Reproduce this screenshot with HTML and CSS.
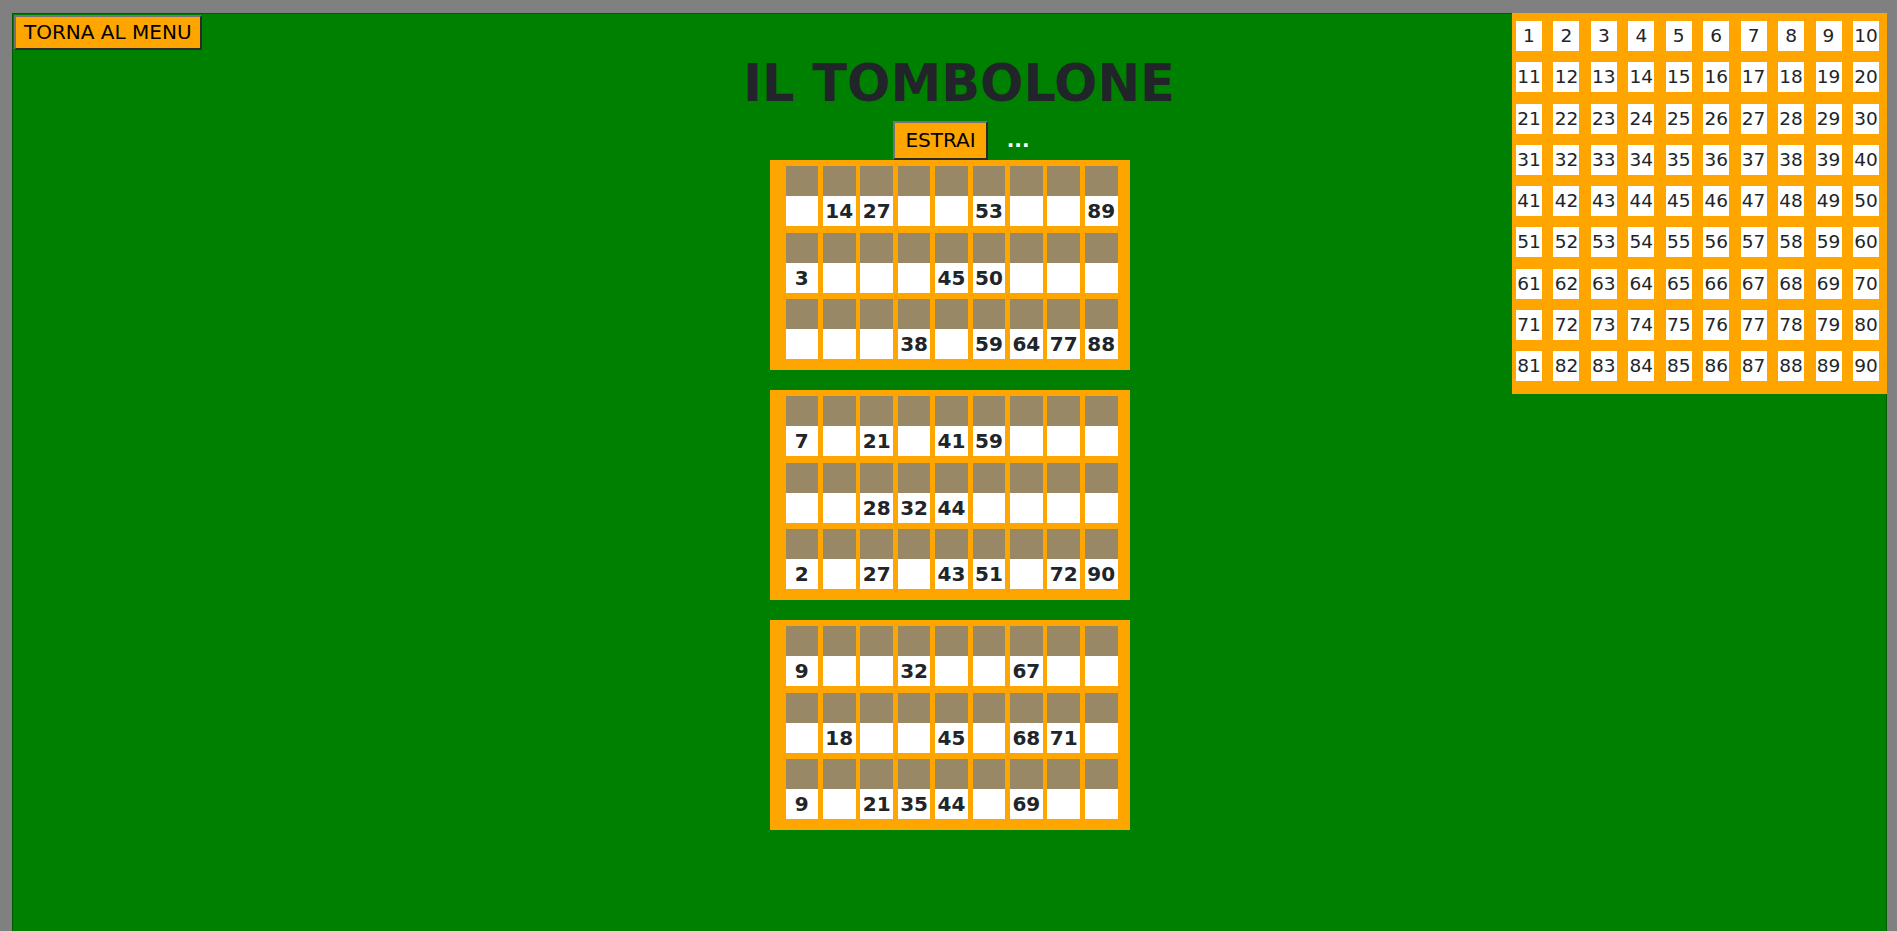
FILE: index.html
```html
<!DOCTYPE html>
<html lang="it">
<head>
<meta charset="utf-8">
<title>Il Tombolone</title>
<link rel="stylesheet" href="styles.css">
</head>
<body>
<div class="page">
  <div class="left">
    <button class="btn torna">TORNA AL MENU</button>
  </div>
  <div class="center">
    <h1 class="title">IL TOMBOLONE</h1>
    <div class="draw">
      <button class="btn estrai">ESTRAI</button>
      <span class="dots">...</span>
    </div>
    <div class="cards">
      <div class="card">
        <span class="cell"></span><span class="cell">14</span><span class="cell">27</span><span class="cell"></span><span class="cell"></span><span class="cell">53</span><span class="cell"></span><span class="cell"></span><span class="cell">89</span>
        <span class="cell">3</span><span class="cell"></span><span class="cell"></span><span class="cell"></span><span class="cell">45</span><span class="cell">50</span><span class="cell"></span><span class="cell"></span><span class="cell"></span>
        <span class="cell"></span><span class="cell"></span><span class="cell"></span><span class="cell">38</span><span class="cell"></span><span class="cell">59</span><span class="cell">64</span><span class="cell">77</span><span class="cell">88</span>
      </div>
      <div class="card">
        <span class="cell">7</span><span class="cell"></span><span class="cell">21</span><span class="cell"></span><span class="cell">41</span><span class="cell">59</span><span class="cell"></span><span class="cell"></span><span class="cell"></span>
        <span class="cell"></span><span class="cell"></span><span class="cell">28</span><span class="cell">32</span><span class="cell">44</span><span class="cell"></span><span class="cell"></span><span class="cell"></span><span class="cell"></span>
        <span class="cell">2</span><span class="cell"></span><span class="cell">27</span><span class="cell"></span><span class="cell">43</span><span class="cell">51</span><span class="cell"></span><span class="cell">72</span><span class="cell">90</span>
      </div>
      <div class="card">
        <span class="cell">9</span><span class="cell"></span><span class="cell"></span><span class="cell">32</span><span class="cell"></span><span class="cell"></span><span class="cell">67</span><span class="cell"></span><span class="cell"></span>
        <span class="cell"></span><span class="cell">18</span><span class="cell"></span><span class="cell"></span><span class="cell">45</span><span class="cell"></span><span class="cell">68</span><span class="cell">71</span><span class="cell"></span>
        <span class="cell">9</span><span class="cell"></span><span class="cell">21</span><span class="cell">35</span><span class="cell">44</span><span class="cell"></span><span class="cell">69</span><span class="cell"></span><span class="cell"></span>
      </div>
    </div>
  </div>
  <div class="right">
    <div class="board">
      <span class="n">1</span><span class="n">2</span><span class="n">3</span><span class="n">4</span><span class="n">5</span><span class="n">6</span><span class="n">7</span><span class="n">8</span><span class="n">9</span><span class="n">10</span>
      <span class="n">11</span><span class="n">12</span><span class="n">13</span><span class="n">14</span><span class="n">15</span><span class="n">16</span><span class="n">17</span><span class="n">18</span><span class="n">19</span><span class="n">20</span>
      <span class="n">21</span><span class="n">22</span><span class="n">23</span><span class="n">24</span><span class="n">25</span><span class="n">26</span><span class="n">27</span><span class="n">28</span><span class="n">29</span><span class="n">30</span>
      <span class="n">31</span><span class="n">32</span><span class="n">33</span><span class="n">34</span><span class="n">35</span><span class="n">36</span><span class="n">37</span><span class="n">38</span><span class="n">39</span><span class="n">40</span>
      <span class="n">41</span><span class="n">42</span><span class="n">43</span><span class="n">44</span><span class="n">45</span><span class="n">46</span><span class="n">47</span><span class="n">48</span><span class="n">49</span><span class="n">50</span>
      <span class="n">51</span><span class="n">52</span><span class="n">53</span><span class="n">54</span><span class="n">55</span><span class="n">56</span><span class="n">57</span><span class="n">58</span><span class="n">59</span><span class="n">60</span>
      <span class="n">61</span><span class="n">62</span><span class="n">63</span><span class="n">64</span><span class="n">65</span><span class="n">66</span><span class="n">67</span><span class="n">68</span><span class="n">69</span><span class="n">70</span>
      <span class="n">71</span><span class="n">72</span><span class="n">73</span><span class="n">74</span><span class="n">75</span><span class="n">76</span><span class="n">77</span><span class="n">78</span><span class="n">79</span><span class="n">80</span>
      <span class="n">81</span><span class="n">82</span><span class="n">83</span><span class="n">84</span><span class="n">85</span><span class="n">86</span><span class="n">87</span><span class="n">88</span><span class="n">89</span><span class="n">90</span>
    </div>
  </div>
</div>
</body>
</html>
```
FILE: styles.css
```css
html, body {
  margin: 0;
  padding: 0;
}
body {
  background: #808080;
  font-family: "DejaVu Sans", Verdana, sans-serif;
  color: #212529;
  overflow: hidden;
}
.page {
  margin: 13px 10px 0 12px;
  min-height: calc(100vh - 13px);
  box-sizing: border-box;
  background: #008000;
  border: 1px solid #005c00;
  border-bottom: none;
  display: grid;
  grid-template-columns: 1fr auto 1fr;
  align-items: start;
}
.btn {
  font-family: "DejaVu Sans", Verdana, sans-serif;
  font-size: 20px;
  line-height: 23px;
  color: #000;
  background: #ffa500;
  border: 2px solid;
  border-color: #737373 #2b2b2b #2b2b2b #737373;
  border-radius: 0;
  margin: 0;
  cursor: pointer;
}
.torna {
  margin: 1px 0 0 1px;
  padding: 4px 8px;
}
.center {
  display: flex;
  flex-direction: column;
  align-items: center;
}
.title {
  margin: 41px 0 8px;
  padding-left: 19px;
  font-size: 51px;
  line-height: 58px;
  font-weight: bold;
  color: #212529;
  white-space: nowrap;
}
.draw {
  display: flex;
  align-items: baseline;
  justify-content: center;
  padding-left: 24px;
}
.estrai {
  padding: 6px 10px;
}
.dots {
  margin-left: 19px;
  color: #fff;
  font-weight: bold;
  font-size: 20px;
  line-height: 23px;
}
.cards {
  margin-top: 0;
  display: flex;
  flex-direction: column;
  gap: 20px;
}
.card {
  width: 360px;
  box-sizing: border-box;
  padding: 6px 12px 11px 16px;
  background: #ffa500;
  display: grid;
  grid-template-columns: repeat(9, 1fr);
  column-gap: 4.75px;
  row-gap: 6.5px;
}
.cell {
  height: 60px;
  box-sizing: border-box;
  padding-top: 30px;
  line-height: 30px;
  text-align: center;
  font-weight: bold;
  font-size: 20px;
  color: #212529;
  background: linear-gradient(to bottom, #998866 0, #998866 30px, #ffffff 30px, #ffffff 60px);
  white-space: nowrap;
}
.right {
  display: flex;
  justify-content: flex-end;
}
.board {
  margin: -1px -1px 0 0;
  width: 375px;
  box-sizing: border-box;
  padding: 8px 8px 13px 4px;
  background: #ffa500;
  display: grid;
  grid-template-columns: repeat(10, 26px);
  justify-content: space-between;
  row-gap: 11.25px;
}
.n {
  height: 30px;
  line-height: 30px;
  background: #fff;
  text-align: center;
  font-size: 18.5px;
  color: #212529;
  white-space: nowrap;
}
```
